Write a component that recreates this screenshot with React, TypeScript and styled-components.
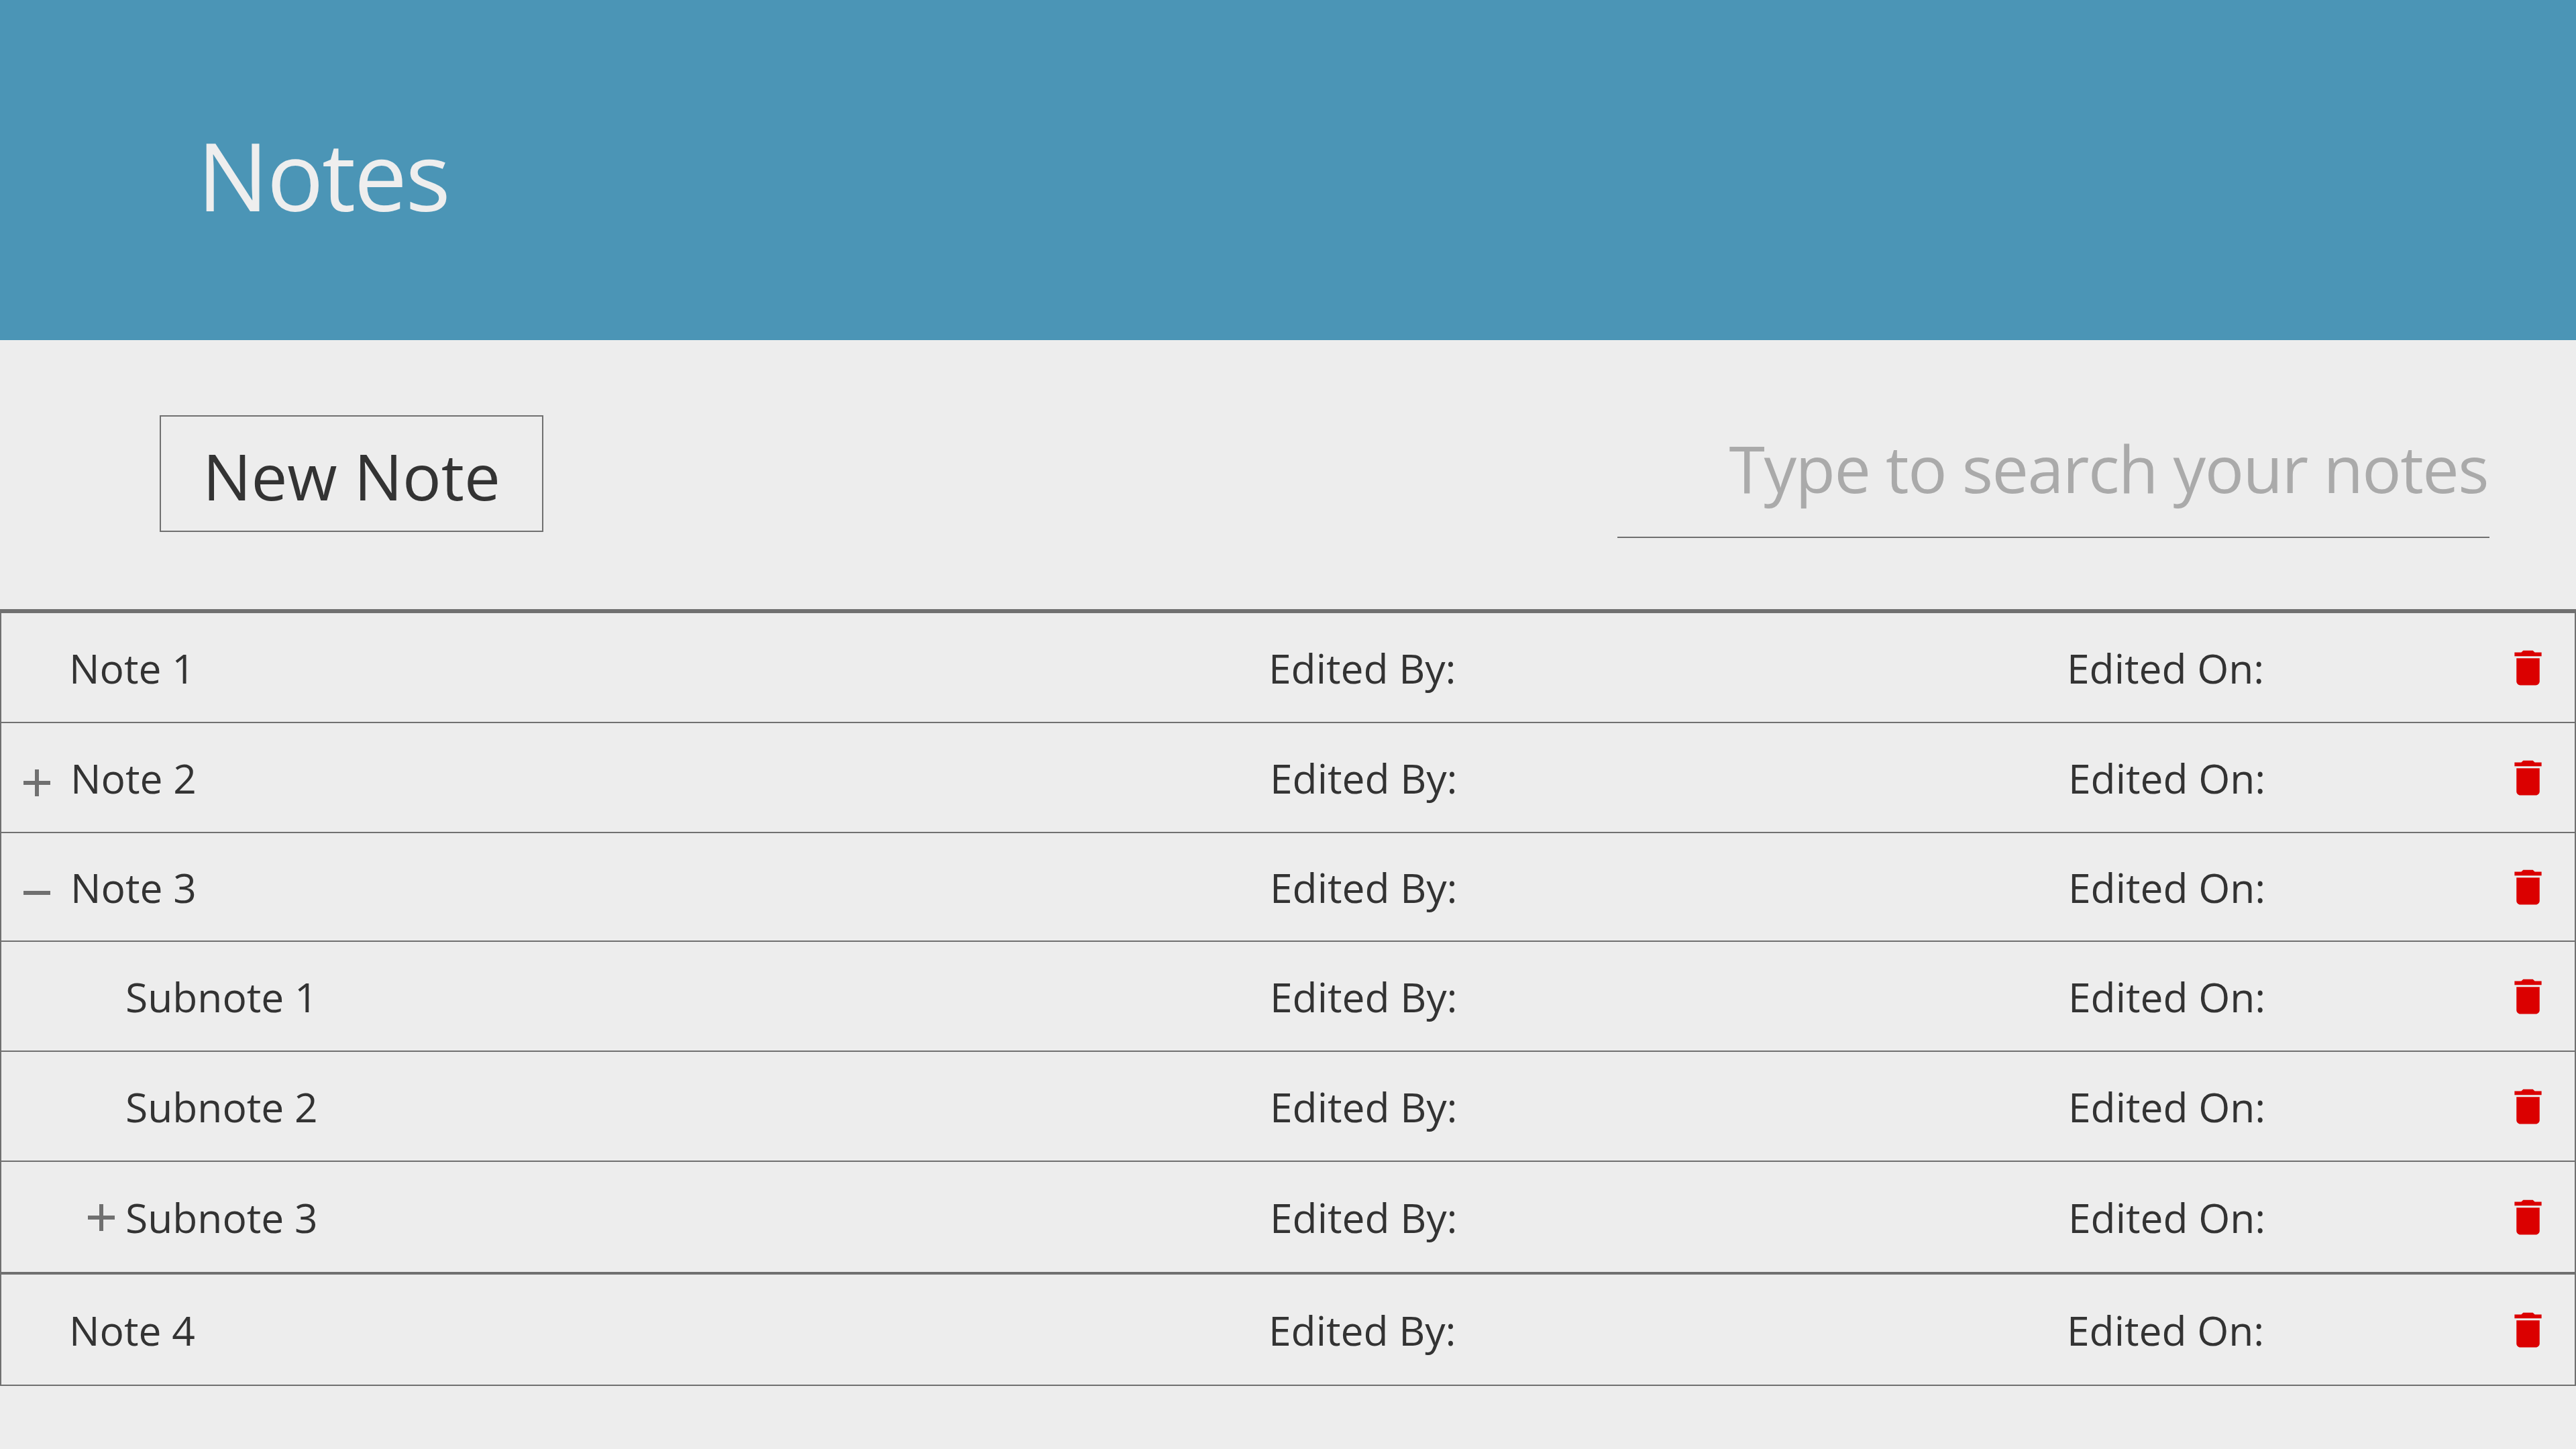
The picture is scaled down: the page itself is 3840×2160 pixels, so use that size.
import React from "react";
import styled, { createGlobalStyle } from "styled-components";

const GlobalStyle = createGlobalStyle`
  html, body {
    margin: 0;
    padding: 0;
    background: #ededed;
  }
  body {
    font-family: "Open Sans", "Noto Sans", sans-serif;
    color: #333333;
  }
`;

const Page = styled.div`
  width: 3840px;
  height: 2160px;
  overflow: hidden;
  background: #ededed;
`;

const Header = styled.header`
  height: 507px;
  box-sizing: border-box;
  padding: 160px 0 0 294px;
  background: #4b95b6;
`;

const Title = styled.h1`
  margin: 0;
  font-size: 141px;
  line-height: 200px;
  font-weight: 400;
  letter-spacing: -2.5px;
  color: #eeeeee;
`;

const Toolbar = styled.div`
  height: 401px;
  box-sizing: border-box;
  padding: 112px 129px 0 238px;
  display: flex;
  justify-content: space-between;
  align-items: flex-start;
`;

const NewNoteButton = styled.button`
  width: 572px;
  height: 174px;
  box-sizing: border-box;
  border: 2px solid #707070;
  background: transparent;
  color: #333333;
  font-family: inherit;
  font-size: 96px;
  padding: 4px 0 0;
`;

const SearchInput = styled.input`
  width: 1300px;
  height: 183px;
  box-sizing: border-box;
  padding: 0 2px 26px 0;
  border: 0;
  border-bottom: 2px solid #707070;
  outline: none;
  background: transparent;
  text-align: right;
  font-family: inherit;
  font-size: 97px;
  font-weight: 400;
  letter-spacing: -1.5px;
  &::placeholder {
    color: #aaaaaa;
    opacity: 1;
  }
`;

const Table = styled.div`
  border-top: 6px solid #707070;
  border-left: 2px solid #707070;
  border-right: 2px solid #707070;
`;

const Row = styled.div<{ $height: number; $nested?: boolean; $heavy?: boolean }>`
  display: grid;
  grid-template-columns: ${(p) => (p.$nested ? "1891px" : "1889px")} 1190px 1fr 69px;
  align-items: center;
  height: ${(p) => p.$height}px;
  box-sizing: border-box;
  padding-right: 35px;
  border-bottom: ${(p) => (p.$heavy ? "4px" : "2px")} solid #707070;
  font-size: 60.5px;
`;

const NameCell = styled.div<{ $indent: number }>`
  position: relative;
  padding-left: ${(p) => p.$indent}px;
`;

const Toggle = styled.svg<{ $left: number; $shift: number }>`
  position: absolute;
  top: 50%;
  left: ${(p) => p.$left}px;
  margin-top: ${(p) => p.$shift}px;
  width: 40px;
  height: 40px;
  fill: #707070;
`;

const TrashIcon = styled.svg`
  width: 69px;
  height: 69px;
  fill: #db0000;
  display: block;
`;

type Note = {
  name: string;
  indent: number;
  height: number;
  nested?: boolean;
  heavy?: boolean;
  toggle?: { kind: "plus" | "minus"; left: number; shift: number };
};

const notes: Note[] = [
  { name: "Note 1", indent: 101, height: 164 },
  { name: "Note 2", indent: 103, height: 164, nested: true, toggle: { kind: "plus", left: 33, shift: -12 } },
  { name: "Note 3", indent: 103, height: 162, nested: true, toggle: { kind: "minus", left: 33, shift: -11 } },
  { name: "Subnote 1", indent: 185, height: 164, nested: true },
  { name: "Subnote 2", indent: 185, height: 164, nested: true },
  { name: "Subnote 3", indent: 185, height: 168, nested: true, heavy: true, toggle: { kind: "plus", left: 129, shift: -19 } },
  { name: "Note 4", indent: 101, height: 166 },
];

export default function App() {
  return (
    <Page>
      <GlobalStyle />
      <Header>
        <Title>Notes</Title>
      </Header>
      <Toolbar>
        <NewNoteButton>New Note</NewNoteButton>
        <SearchInput placeholder="Type to search your notes" />
      </Toolbar>
      <Table>
        {notes.map((note) => (
          <Row key={note.name} $height={note.height} $nested={note.nested} $heavy={note.heavy}>
            <NameCell $indent={note.indent}>
              {note.toggle && (
                <Toggle viewBox="0 0 40 40" $left={note.toggle.left} $shift={note.toggle.shift}>
                  <rect x="0" y="17" width="40" height="6" />
                  {note.toggle.kind === "plus" && <rect x="17" y="0" width="6" height="40" />}
                </Toggle>
              )}
              {note.name}
            </NameCell>
            <div>Edited By:</div>
            <div>Edited On:</div>
            <TrashIcon viewBox="0 0 24 24">
              <path d="M6 19c0 1.1.9 2 2 2h8c1.1 0 2-.9 2-2V7H6v12zM19 4h-3.5l-1-1h-5l-1 1H5v2h14V4z" />
            </TrashIcon>
          </Row>
        ))}
      </Table>
    </Page>
  );
}
